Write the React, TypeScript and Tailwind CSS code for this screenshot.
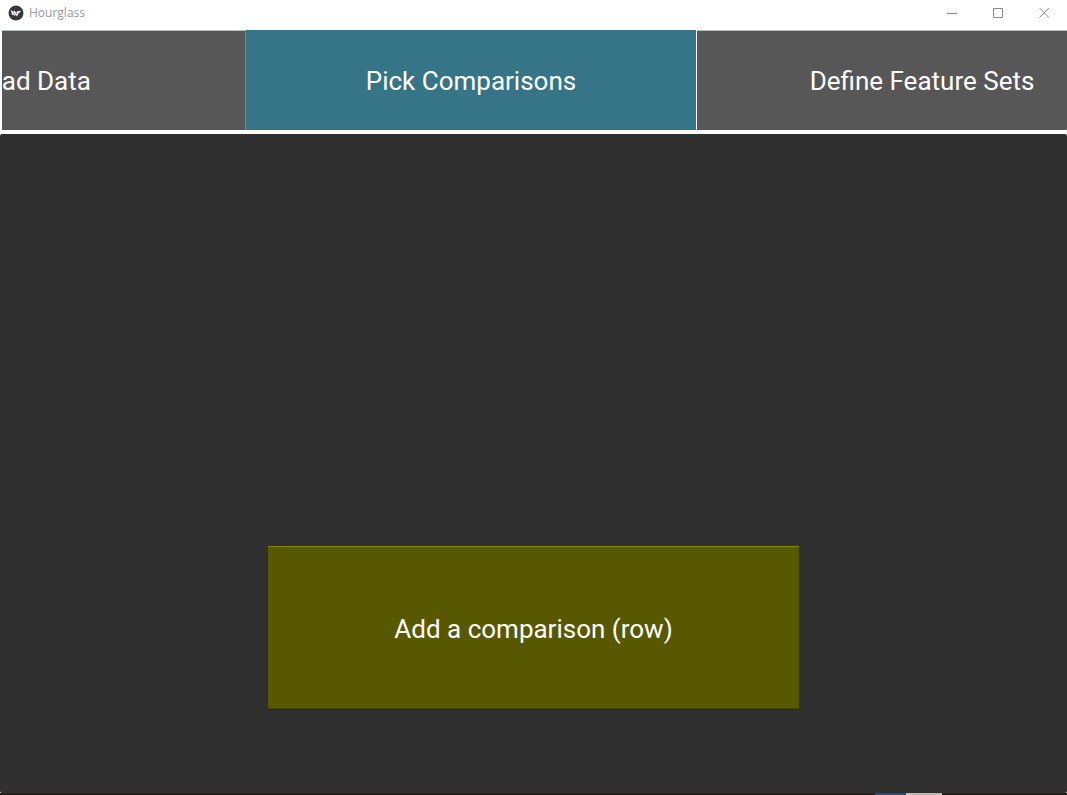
import React, { useState } from "react";

const tabs = ["Upload Data", "Pick Comparisons", "Define Feature Sets"];

function AppIcon() {
  return (
    <svg className="size-4 shrink-0" viewBox="0 0 16 16" aria-hidden="true">
      <circle cx="8" cy="8" r="7.5" fill="#35393d" />
      <path
        d="M2.8 5 L5.6 6.8 L6 5.2 L8.4 7.8 L9 6.2 L13.4 5.8 L10.6 8.4 L9 11.4 L7.8 9.8 L6.6 11 L5.6 9.8 L4 10 Z"
        fill="#eef0f1"
      />
      <path d="M5.4 7.4 L7 9.6 M8.4 7.8 L8.8 9" stroke="#35393d" strokeWidth="0.5" />
    </svg>
  );
}

function TitleBar() {
  const control = "flex h-6 w-[46px] items-center justify-center text-[#8b8b8b]";
  return (
    <header className="flex h-[30px] items-start justify-between bg-white">
      <div className="flex h-[26px] items-center gap-[5px] pl-2">
        <AppIcon />
        <h1 className="font-['Open_Sans','Noto_Sans',sans-serif] text-[12px] leading-4 text-[#999999]">
          Hourglass
        </h1>
      </div>
      <div className="flex">
        <button type="button" aria-label="Minimize" className={control}>
          <svg width="11" height="11" viewBox="0 0 11 11" stroke="currentColor" fill="none">
            <path d="M0 6.5H10" />
          </svg>
        </button>
        <button type="button" aria-label="Maximize" className={control}>
          <svg width="11" height="11" viewBox="0 0 11 11" stroke="currentColor" fill="none">
            <path d="M0.5 1.5H9.5V10.5H0.5Z" />
          </svg>
        </button>
        <button type="button" aria-label="Close" className={control}>
          <svg width="11" height="11" viewBox="0 0 11 11" stroke="currentColor" fill="none">
            <path d="M0.5 1L10 10.5M10 1L0.5 10.5" />
          </svg>
        </button>
      </div>
    </header>
  );
}

export default function App() {
  const [active, setActive] = useState(1);

  return (
    <div className="flex min-h-screen flex-col bg-white font-[Roboto,sans-serif] text-[26px] leading-8 text-white">
      <TitleBar />
      <nav className="ml-0.5 overflow-hidden">
        <div className="-ml-[207px] flex">
          {tabs.map((tab, index) => (
            <button
              key={tab}
              type="button"
              aria-pressed={index === active}
              onClick={() => setActive(index)}
              className={
                index === active
                  ? "h-[100px] w-[451px] shrink-0 border-r border-white bg-[#367487] pt-0.5"
                  : "h-[100px] w-[451px] shrink-0 border-t border-r border-t-[#b9bdbd] border-r-[#858585] bg-[#575757] pt-px"
              }
            >
              {tab}
            </button>
          ))}
        </div>
      </nav>
      <main className="mt-1 flex grow flex-col items-center justify-end rounded-xs bg-[#303030] pb-[84px]">
        <div className="w-1/2 px-px">
          <button
            type="button"
            className="h-[163px] w-full border-t border-b border-t-[#858500] border-b-[#454505] bg-[#585800] pt-0.5 shadow-[0_1px_1px_#262626]"
          >
            Add a comparison (row)
          </button>
        </div>
      </main>
      <div className="flex h-0.5 justify-end bg-[#22211a] pr-[125px]">
        <span className="w-[31px] bg-[#2a4a83]" />
        <span className="w-9 bg-[#bdb9b5]" />
      </div>
    </div>
  );
}
